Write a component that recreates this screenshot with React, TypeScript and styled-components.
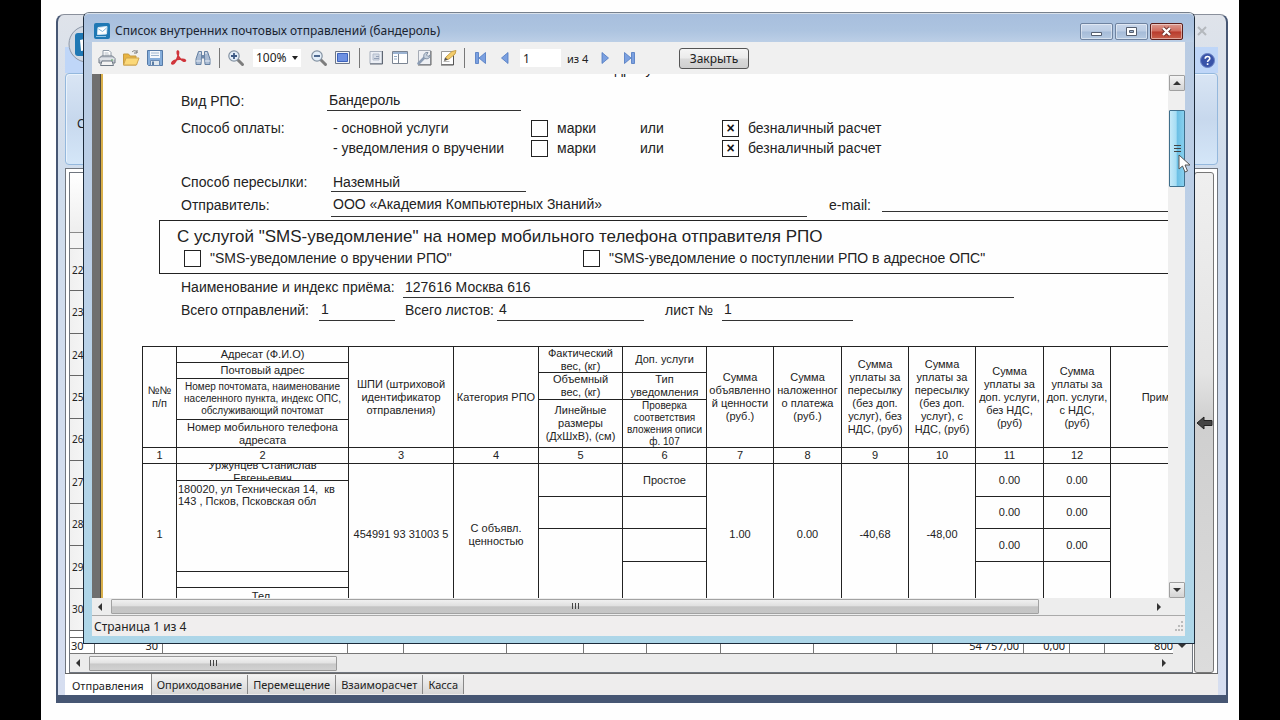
import React from "react";
import styled, { createGlobalStyle } from "styled-components";

const ARIAL = '"Liberation Sans", Arial, sans-serif';
const UI = '"Noto Sans", "Segoe UI", sans-serif';

const Global = createGlobalStyle`
  *, *::before, *::after { box-sizing: border-box; }
  body { margin: 0; background: #000; font-family: ${UI}; font-size: 12px; color: #222; }
  button, input, select { font: inherit; color: inherit; }
`;

const Desktop = styled.main`
  position: relative;
  display: flex;
  height: 100vh;
  min-height: 560px;
  margin: 0 41px;
  padding: 14px 11px 17px 15px;
  background: #fefefe;
  overflow: hidden;
`;

/* ---------- main application window ---------- */

const AppWindow = styled.section`
  position: relative;
  flex: 1;
  min-width: 0;
  display: flex;
  flex-direction: column;
  padding: 0 8px 0 7px;
  border: solid #465673;
  border-width: 1px 2px 8px 2px;
  border-top-color: #8a909c;
  border-radius: 8px 8px 0 0;
  background: linear-gradient(#dfe3ea, #cfdcec 160px, #d6def0);
`;

const AppTitle = styled.header`
  display: flex;
  justify-content: flex-end;
  align-items: center;
  height: 32px;
  flex: none;
  padding: 0 8px 0 4px;
`;

const Orb = styled.svg`
  position: absolute;
  left: 10px;
  top: 10px;
`;

const GhostButton = styled.button`
  width: 16px;
  height: 16px;
  padding: 0;
  border: 0;
  background: none;
  display: flex;
  align-items: center;
  justify-content: center;
`;

const RibbonTabs = styled.div`
  display: flex;
  justify-content: flex-end;
  align-items: center;
  height: 26px;
  flex: none;
  padding-right: 3px;
  background: #bfd6f8;
`;

const Ribbon = styled.div`
  display: flex;
  align-items: center;
  height: 92px;
  flex: none;
  padding: 9px 0 0 11px;
  border: 1px solid #94b8dd;
  border-radius: 4px;
  background: linear-gradient(#d9e5f4, #c7d8ed 50%, #d4e6f8);
  box-shadow: inset 1px 1px 0 #eaf3fc;
`;

const Workspace = styled.div`
  display: flex;
  flex: 1;
  min-height: 0;
  margin-top: 3px;
  padding: 3px 3px 0 3px;
  border: solid #70767f;
  border-width: 1px 1px 0 1px;
  background: #fff;
`;

const Journal = styled.div`
  flex: 1;
  min-width: 0;
  display: flex;
  flex-direction: column;
  border: 1px solid #70767f;
  background: #fff;
`;

const JournalHead = styled.div`
  height: 59px;
  flex: none;
  background: linear-gradient(#fff, #eee);
`;

const JournalFilter = styled.div`
  height: 17px;
  flex: none;
  border: solid #8a8a8a;
  border-width: 1px 0;
  background: #f4f4f4;
`;

const JournalRows = styled.div`
  flex: 1;
  display: flex;
  flex-direction: column;
  min-height: 0;
`;

const JournalRow = styled.div`
  flex: 1;
  display: flex;
  align-items: center;
  padding-left: 2px;
  font-size: 10px;
  border-bottom: 1px solid #666;
  background: linear-gradient(90deg, #f0f0f0, #fafafa 30px, #fff 30px);
`;

const JournalGap = styled.div`
  height: 7px;
  flex: none;
  border-bottom: 1px solid #666;
`;

const TotalsBar = styled.div`
  display: flex;
  align-items: center;
  height: 16px;
  flex: none;
  padding-right: 6px;
  background: #ececec;
`;

const Totals = styled.table`
  flex: 1;
  table-layout: fixed;
  width: 100%;
  height: 16px;
  margin-right: 5px;
  border-collapse: separate;
  border-spacing: 0;
  font-size: 11px;
  line-height: 13px;
  background: #fff;
`;

const TotalCell = styled.td<{ $left?: boolean }>`
  height: 16px;
  padding: 1px 4px 1px 1px;
  text-align: ${(p) => (p.$left ? "left" : "right")};
  border: solid #777;
  border-width: 0 1px 1px 0;
  white-space: nowrap;
  overflow: hidden;
  &:last-child { border-right: 0; padding-right: 0; }
`;

const AppScroll = styled.div`
  display: flex;
  align-items: center;
  height: 18px;
  flex: none;
  padding: 0 24px 0 4px;
  background: #ececec;
`;

const Spacer = styled.div`
  flex: 1;
`;

const AppThumb = styled.div`
  display: flex;
  align-items: center;
  justify-content: center;
  width: 248px;
  height: 15px;
  margin-left: 7px;
  border: 1px solid #9a9a9a;
  border-radius: 1px;
  background: linear-gradient(#f4f4f4, #e2e2e2 48%, #c8c8c8 52%, #d2d2d2);
`;

const SidePane = styled.aside`
  display: flex;
  align-items: center;
  justify-content: center;
  width: 20px;
  margin-left: 1px;
  flex: none;
  border: 1px solid #777;
  border-radius: 3px;
  background: linear-gradient(#efefef, #e4e4e4 40%, #cfcfcf 50%, #dcdcdc);
`;

const SheetTabs = styled.nav`
  display: flex;
  align-items: flex-start;
  height: 22px;
  flex: none;
  border-top: 1px solid #666;
  background: #eeeded;
`;

const SheetTab = styled.button<{ $active?: boolean }>`
  height: ${(p) => (p.$active ? 21 : 19)}px;
  margin-top: ${(p) => (p.$active ? 0 : 1)}px;
  padding: ${(p) => (p.$active ? "3px 7px 0" : "0 5px")};
  border: solid #888;
  border-width: 0 1px 0 0;
  font-size: 11px;
  line-height: 16px;
  background: ${(p) => (p.$active ? "#fff" : "linear-gradient(#f3f3f3, #d6d6d6)")};
`;

/* ---------- report preview dialog ---------- */

const Dialog = styled.section`
  position: absolute;
  top: 12px;
  left: 42px;
  right: 44px;
  bottom: 76px;
  display: flex;
  flex-direction: column;
  padding: 0 9px 7px 8px;
  border: 1px solid #1c2a3a;
  border-top-color: #77808c;
  border-radius: 6px 6px 0 0;
  background: linear-gradient(#b9cbe2, #bcd0e8 40%, #add6e8);
`;

const DialogTitle = styled.header`
  display: flex;
  align-items: center;
  height: 29px;
  flex: none;
  margin: 0 -9px 0 -8px;
  padding: 6px 11px 0 10px;
  border-radius: 5px 5px 0 0;
  border-top: 1px solid #d8e0ea;
  background: linear-gradient(#a7bedd, #adc4e0 60%, #bccfe6);
`;

const DialogName = styled.h1`
  flex: 1;
  margin: 0 0 0 5px;
  font-size: 12px;
  font-weight: 400;
  line-height: 18px;
  color: #1b2430;
`;

const CaptionButton = styled.button<{ $close?: boolean }>`
  display: flex;
  align-items: center;
  justify-content: center;
  width: 33px;
  height: 17px;
  margin-left: 2px;
  padding: 0;
  border: 1px solid ${(p) => (p.$close ? "#5c1f1c" : "#6f83a0")};
  border-radius: 2px;
  box-shadow: inset 0 0 0 1px rgba(255, 255, 255, 0.45);
  background: ${(p) =>
    p.$close
      ? "linear-gradient(#dc9a90, #cf6a5c 48%, #b83a2c 52%, #c8604c)"
      : "linear-gradient(#c8d6ea, #bccde4 48%, #a5bbd8 52%, #b6cae2)"};
`;

const Toolbar = styled.div`
  display: flex;
  align-items: center;
  height: 32px;
  flex: none;
  padding-left: 5px;
  background: #f0f0f0;
`;

const ToolButton = styled.button`
  display: flex;
  align-items: center;
  justify-content: center;
  width: 20px;
  height: 22px;
  margin-right: 4px;
  padding: 0;
  border: 0;
  background: none;
`;

const Divider = styled.span`
  width: 1px;
  height: 20px;
  margin: 0 6px 0 2px;
  background: #777;
`;

const ZoomBox = styled.label`
  display: flex;
  align-items: center;
  width: 48px;
  height: 18px;
  margin: 0 8px 0 3px;
  background: #fff;
`;

const ZoomSelect = styled.select`
  appearance: none;
  width: 39px;
  padding: 0 0 0 3px;
  border: 0;
  background: none;
  font-size: 12px;
  line-height: 18px;
`;

const PageInput = styled.input`
  width: 41px;
  height: 18px;
  margin: 0 6px 0 1px;
  padding: 0 3px;
  border: 0;
  background: #fff;
  font-size: 12px;
`;

const PageCount = styled.span`
  width: 28px;
  font-size: 11px;
`;

const CloseButton = styled.button`
  width: 70px;
  height: 21px;
  margin-left: 36px;
  padding: 0;
  border: 1px solid #555;
  border-radius: 3px;
  font-size: 12px;
  line-height: 17px;
  background: linear-gradient(#f5f5f5, #ebebeb 48%, #dadada 52%, #cfcfcf);
`;

const Viewer = styled.div`
  display: flex;
  flex: 1;
  min-height: 0;
`;

const PageEdge = styled.div`
  width: 11px;
  flex: none;
  border-right: 2px solid #d9b04c;
  background: linear-gradient(90deg, #6f6f6f 8px, #4f4a40 8px);
`;

const Paper = styled.div`
  flex: 1;
  min-width: 0;
  overflow: hidden;
  background: #fefefe;
  font-family: ${ARIAL};
  font-size: 14px;
  line-height: 16px;
  color: #222;
`;

const CutHeading = styled.div`
  display: flex;
  align-items: flex-end;
  height: 3px;
  margin: 0 0 13px 504px;
  overflow: hidden;
`;

const FormRow = styled.div<{ $h: number; $top?: number }>`
  display: flex;
  align-items: stretch;
  height: ${(p) => p.$h}px;
  margin-top: ${(p) => p.$top ?? 0}px;
  padding-left: 78px;
  white-space: nowrap;
`;

const Cell = styled.span<{ $w?: number }>`
  display: flex;
  align-items: center;
  flex: none;
  width: ${(p) => (p.$w ? p.$w + "px" : "auto")};
`;

const Filled = styled(Cell)`
  padding-left: 2px;
  border-bottom: 1px solid #333;
`;

const EmailLine = styled.span`
  flex: 1;
  margin: 0 0 5px 0;
  border-bottom: 1px solid #333;
`;

const Tick = styled.input`
  appearance: none;
  display: grid;
  place-items: center;
  width: 17px;
  height: 17px;
  flex: none;
  margin: 0;
  border: 1px solid #222;
  background: #fff;
  &:checked::after {
    content: "×";
    font: 700 14px/14px ${ARIAL};
    color: #111;
  }
`;

const TickLabel = styled.label<{ $w: number }>`
  display: flex;
  align-items: center;
  gap: 9px;
  flex: none;
  width: ${(p) => p.$w}px;
`;

const SmsBox = styled.div`
  width: 1200px;
  margin: 3px 0 0 56px;
  padding: 3px 0 7px 0;
  border: 1px solid #222;
`;

const SmsTitle = styled.h2`
  margin: 0 0 0 17px;
  font-size: 17px;
  font-weight: 400;
  line-height: 26px;
`;

const SmsOptions = styled.div`
  display: flex;
  height: 16px;
  padding-left: 24px;
  white-space: nowrap;
`;

const Report = styled.table`
  table-layout: fixed;
  width: 1094px;
  margin: 25px 0 0 39px;
  border-collapse: collapse;
  font-size: 11px;
  line-height: 13px;
  text-align: center;
`;

const Head = styled.th`
  height: 101px;
  padding: 0;
  border: 1px solid #222;
  font-weight: 400;
`;

const NumberCell = styled.td`
  height: 16px;
  padding: 0;
  border: 1px solid #222;
`;

const DataCell = styled.td`
  height: 141px;
  padding: 0;
  border: 1px solid #222;
`;

const Stack = styled.div`
  display: flex;
  flex-direction: column;
  height: 100%;
`;

const Part = styled.div<{ $h: number; $small?: boolean; $address?: boolean }>`
  display: flex;
  align-items: ${(p) => (p.$address ? "flex-start" : "center")};
  justify-content: ${(p) => (p.$address ? "flex-start" : "center")};
  height: ${(p) => p.$h}px;
  flex: none;
  padding: ${(p) => (p.$address ? "2px 1px 0 1px" : "0")};
  overflow: hidden;
  text-align: ${(p) => (p.$address ? "left" : "center")};
  font-size: ${(p) => (p.$small ? 10 : 11)}px;
  line-height: ${(p) => (p.$small || p.$address ? 12 : 13)}px;
  white-space: ${(p) => (p.$address ? "pre-wrap" : "pre-line")};
  border-bottom: 1px solid #222;
  &:last-child { border-bottom: 0; }
`;

const Lines = styled.div`
  white-space: pre;
`;

const VScroll = styled.div`
  position: relative;
  display: flex;
  flex-direction: column;
  justify-content: space-between;
  width: 17px;
  flex: none;
  padding: 1px 0 0 1px;
  background: #efefef;
`;

const ArrowButton = styled.button`
  display: flex;
  align-items: center;
  justify-content: center;
  width: 16px;
  height: 16px;
  padding: 0;
  border: 1px solid #a0a0a0;
  border-radius: 1px;
  background: linear-gradient(#f4f4f4, #d4d4d4);
`;

const VThumb = styled.div`
  display: flex;
  align-items: center;
  justify-content: center;
  width: 16px;
  height: 77px;
  margin: 19px 0 auto;
  border: 1px solid #3f6f8c;
  border-radius: 1px;
  background: linear-gradient(90deg, #c5e9f8, #a5ddf4 45%, #6bbfe4 50%, #86cfee);
`;

const HScroll = styled.div`
  display: flex;
  align-items: center;
  height: 18px;
  flex: none;
  padding: 0 22px 0 4px;
  background: #ededed;
  border-bottom: 1px solid #aaa;
`;

const HThumb = styled.div`
  display: flex;
  align-items: center;
  justify-content: center;
  width: 87%;
  height: 15px;
  margin-left: 7px;
  border: 1px solid #a2a2a2;
  border-radius: 1px;
  background: linear-gradient(#f0f0f0, #e0e0e0 45%, #c4c4c4 52%, #c6c6c6);
`;

const Status = styled.footer`
  display: flex;
  align-items: center;
  justify-content: space-between;
  height: 20px;
  flex: none;
  padding: 0 1px 0 2px;
  background: #f0eeee;
  font-size: 12px;
`;

const Pointer = styled.svg`
  position: absolute;
  left: 10px;
  top: 80px;
`;

/* ---------- icons ---------- */

const Icon = ({ children, w = 18, h = 18 }: { children: React.ReactNode; w?: number; h?: number }) => (
  <svg width={w} height={h} viewBox={`0 0 ${w} ${h}`} aria-hidden="true">
    {children}
  </svg>
);

const Logo = () => (
  <svg width="16" height="16" viewBox="0 0 16 16" aria-hidden="true">
    <rect width="16" height="16" rx="2" fill="#1f78b4" />
    <path d="M4 4.500 13 3.500l-.500 7.500-9 .500z" fill="#fff" stroke="#d5e8f5" />
    <path d="m4.500 6 4 2.500L12.500 5" stroke="#7fb4d8" fill="none" />
    <path d="M2 13.500h10" stroke="#8fc3e6" />
  </svg>
);

const Grip = ({ vertical }: { vertical?: boolean }) => (
  <svg width="9" height="9" viewBox="0 0 9 9" aria-hidden="true">
    <path d={vertical ? "M1 1.500h7M1 4.500h7M1 7.500h7" : "M1.500 1v6M4.500 1v6M7.500 1v6"} stroke="#444" fill="none" />
  </svg>
);

const Arrow = ({ dir }: { dir: "up" | "down" | "left" | "right" }) => {
  const d = {
    up: "M0 6 4 2l4 4z",
    down: "M0 2l4 4 4-4z",
    left: "M6 0 2 4l4 4z",
    right: "M2 0l4 4-4 4z",
  }[dir];
  return (
    <svg width="8" height="8" viewBox="0 0 8 8" aria-hidden="true">
      <path d={d} fill="#333" />
    </svg>
  );
};

const PrintIcon = () => (
  <Icon>
    <path d="M5 7V1.500h6l2 2V7" fill="#fff" stroke="#8d98a5" />
    <path d="M6.500 4h4M6.500 6h5" stroke="#b4bcc6" />
    <path d="M1 9.500 3.500 7h11L17 9.500V14H1z" fill="#c9ced6" stroke="#6f7985" />
    <path d="M1.500 10h15" stroke="#f4f6f8" />
    <path d="M4 12h10l1.500 4.500h-13z" fill="#f3f3f3" stroke="#6f7985" />
    <path d="M13 11h2" stroke="#57a557" />
  </Icon>
);

const OpenIcon = () => (
  <Icon>
    <path d="M1.500 16V5h5l1.500 2h6v9z" fill="#e9b440" stroke="#c69a40" />
    <path d="M1.500 16 4 9h13l-2.500 7z" fill="#fbd878" stroke="#cfa550" />
    <path d="M10 3c2-2 4-1.500 5 .500m0-2.500v3h-3" fill="none" stroke="#777" />
  </Icon>
);

const SaveIcon = () => (
  <Icon>
    <path d="M1.500 1.500h15v15h-14l-1-1z" fill="#86aedb" stroke="#567aa6" />
    <path d="M4 2h10v7H4z" fill="#f4f8fc" />
    <path d="M5 4h8M5 6.500h8" stroke="#9eb6cf" />
    <path d="M4.500 11.500h9v5h-9z" fill="#dfe7ee" stroke="#6a8ab3" />
    <path d="M6 12.500h2V16H6z" fill="#5b7ca3" />
  </Icon>
);

const PdfIcon = () => (
  <Icon>
    <path
      d="M7.500 2c1.500-.500 1.300 2.500.300 5.500C6.800 10.500 4.500 14.500 2.800 15c-1.800.300-1.300-2 1.200-3.200 3-1.500 7.500-2 10.200-1.300 2.300.800 1.300 2.500-.900 1.500C10.500 10.800 7.800 7 7.300 4.500 7 3 7 2.300 7.500 2z"
      fill="#d8444a"
      fillRule="evenodd"
      stroke="#d0343a"
      strokeWidth="1.500"
    />
  </Icon>
);

const FindIcon = () => (
  <Icon>
    <path d="M4.500 2.500h3V8l-.500 7.500h-5V10zM10.500 2.500h3L16 10v5.500h-5L10.500 8z" fill="#a9bbd3" stroke="#6580a2" />
    <path d="M7.500 6h3v3.500h-3z" fill="#6f89aa" />
    <path d="M2 12h5M11 12h5" stroke="#e8eef6" />
    <path d="M5 4h2M11 4h2" stroke="#eef3f8" />
  </Icon>
);

const MagnifyIcon = ({ plus }: { plus?: boolean }) => (
  <Icon>
    <path d="m11 11 4.500 4.500" stroke="#7d7d7d" strokeWidth="3" strokeLinecap="round" />
    <circle cx="7" cy="7" r="5.200" fill="#e4eef8" stroke="#8593a3" strokeWidth="1.200" />
    <path d={plus ? "M4 7h6M7 4v6" : "M4 7h6"} stroke="#3d5a84" strokeWidth="1.800" />
  </Icon>
);

const FitIcon = () => (
  <Icon>
    <path d="M1.500 2.500h14v12h-14z" fill="#f2f4f8" stroke="#6c7688" />
    <path d="M3.500 4.500h10v8h-10z" fill="#6d90e2" stroke="#3d62ba" />
  </Icon>
);

const MarginsIcon = () => (
  <Icon>
    <path d="M3 2.500h12v12H3z" fill="#eceff5" stroke="#a8b0bd" />
    <path d="M15.500 2v13H3" fill="none" stroke="#5f6672" />
    <path d="M6 5h6v6H6z" fill="#d5dbe6" stroke="#b4bdcc" />
    <path d="M9 7.500h3M7 9.500h5" stroke="#95a2b8" />
  </Icon>
);

const OutlineIcon = () => (
  <Icon>
    <path d="M1.500 2.500h15v12h-15z" fill="#fff" stroke="#7b8593" />
    <path d="M2 4h14" stroke="#9bb3d2" strokeWidth="2" />
    <path d="M7.500 5v9" stroke="#7b8593" />
    <path d="M3 7.500h3M3 10h3" stroke="#8fa8c4" />
  </Icon>
);

const SettingsIcon = () => (
  <Icon>
    <path d="M3.500 1.500h12v14h-12z" fill="#eef0f4" stroke="#a5abb5" />
    <path d="M16 2v14H3" fill="none" stroke="#666" />
    <path d="m3.500 14.500 6-6" stroke="#8b9cb4" strokeWidth="2.600" strokeLinecap="round" />
    <path d="M9 8.500C8 5.500 10 3 13 3.500L11.500 6l1.500 1.500 2-1.500c.500 3-2.500 4.500-5 3.500z" fill="#c6d1de" stroke="#8190a5" />
  </Icon>
);

const EditIcon = () => (
  <Icon>
    <path d="M2.500 2.500h12v13h-12z" fill="#fdfdfd" stroke="#999" />
    <path d="M14.500 3v13H2" fill="none" stroke="#555" />
    <path d="M4.500 12.500h6" stroke="#b5b5b5" />
    <path d="m6 11 1-3 6-5.500 4-1-1 3.500-6 5z" fill="#f3cd6c" stroke="#c9a04a" />
    <path d="m5 12 1-3.500 3 2z" fill="#555" />
  </Icon>
);

const NavIcon = ({ kind }: { kind: "first" | "prev" | "next" | "last" }) => {
  const left = kind === "first" || kind === "prev";
  const bar = kind === "first" || kind === "last";
  return (
    <Icon w={14} h={14}>
      <g transform={left ? undefined : "matrix(-1 0 0 1 14 0)"} fill="#7ba0e0" stroke="#4d77bf" strokeWidth="0.800">
        {bar && <path d="M1.500 1.500h3v11h-3z" />}
        <path d={bar ? "M11.500 1.500v11L5 7z" : "M10 1.500v11L3.500 7z"} />
      </g>
    </Icon>
  );
};

/* ---------- data ---------- */

const journalNumbers = [22, 23, 24, 25, 26, 27, 28, 29, 30];

const totalColumns: Array<[string, number | undefined]> = [
  ["30", 25],
  ["30", 68],
  ["", 185],
  ["", 56],
  ["", 103],
  ["", 77],
  ["", 63],
  ["", 74],
  ["", 93],
  ["", 83],
  ["", 36],
  ["54 757,00", 91],
  ["0,00", 46],
  ["", 35],
  ["800", undefined],
];

const reportColumns = [34, 172, 105, 85, 84, 84, 67, 68, 67, 67, 68, 67, 126];

const tools: Array<[string, React.ReactNode]> = [
  ["Печать", <PrintIcon />],
  ["Открыть", <OpenIcon />],
  ["Сохранить", <SaveIcon />],
  ["Экспорт в PDF", <PdfIcon />],
  ["Найти", <FindIcon />],
];

const pageTools: Array<[string, React.ReactNode]> = [
  ["Поля страницы", <MarginsIcon />],
  ["Структура", <OutlineIcon />],
  ["Параметры", <SettingsIcon />],
  ["Правка", <EditIcon />],
];

const sheets = ["Отправления", "Оприходование", "Перемещение", "Взаиморасчет", "Касса"];

const Tool = ({ name, children }: { name: string; children: React.ReactNode }) => (
  <ToolButton type="button" aria-label={name}>
    {children}
  </ToolButton>
);

const PaymentRow = ({ label, kind, top }: { label: string; kind: string; top?: number }) => (
  <FormRow $h={20} $top={top}>
    <Cell $w={152}>{label}</Cell>
    <Cell $w={198}>{kind}</Cell>
    <TickLabel $w={109}>
      <Tick type="checkbox" />
      марки
    </TickLabel>
    <Cell $w={82}>или</Cell>
    <TickLabel $w={180}>
      <Tick type="checkbox" defaultChecked />
      безналичный расчет
    </TickLabel>
  </FormRow>
);

const Form = () => (
  <>
    <CutHeading>адресу</CutHeading>
    <FormRow $h={21}>
      <Cell $w={146}>Вид РПО:</Cell>
      <Filled $w={194}>Бандероль</Filled>
    </FormRow>
    <PaymentRow top={7} label="Способ оплаты:" kind="- основной услуги" />
    <PaymentRow label="" kind="- уведомления о вручении" />
    <FormRow $h={20} $top={14}>
      <Cell $w={150}>Способ пересылки:</Cell>
      <Filled $w={195}>Наземный</Filled>
    </FormRow>
    <FormRow $h={25}>
      <Cell $w={150}>Отправитель:</Cell>
      <Filled $w={476}>ООО «Академия Компьютерных Знаний»</Filled>
      <Cell $w={75}>
        <Cell $w={22} />
        e-mail:
      </Cell>
      <EmailLine />
    </FormRow>
    <SmsBox>
      <SmsTitle>С услугой "SMS-уведомление" на номер мобильного телефона отправителя РПО</SmsTitle>
      <SmsOptions>
        <TickLabel $w={399}>
          <Tick type="checkbox" />
          "SMS-уведомление о вручении РПО"
        </TickLabel>
        <TickLabel $w={410}>
          <Tick type="checkbox" />
          "SMS-уведомление о поступлении РПО в адресное ОПС"
        </TickLabel>
      </SmsOptions>
    </SmsBox>
    <FormRow $h={22} $top={2}>
      <Cell $w={222}>Наименование и индекс приёма:</Cell>
      <Filled $w={611}>127616 Москва 616</Filled>
    </FormRow>
    <FormRow $h={23}>
      <Cell $w={138}>Всего отправлений:</Cell>
      <Filled $w={76}>1</Filled>
      <Cell $w={102}>
        <Cell $w={10} />
        Всего листов:
      </Cell>
      <Filled $w={147}>4</Filled>
      <Cell $w={78}>
        <Cell $w={21} />
        лист №
      </Cell>
      <Filled $w={131}>1</Filled>
    </FormRow>
  </>
);

const ReportTable = () => (
  <Report>
    <colgroup>
      {reportColumns.map((w, i) => (
        <col key={i} width={w} />
      ))}
    </colgroup>
    <thead>
      <tr>
        <Head>№№<br />п/п</Head>
        <Head>
          <Stack>
            <Part $h={16}>Адресат (Ф.И.О)</Part>
            <Part $h={16}>Почтовый адрес</Part>
            <Part $h={41} $small>
              {"Номер почтомата, наименование\nнаселенного пункта, индекс ОПС,\nобслуживающий почтомат"}
            </Part>
            <Part $h={27}>{"Номер мобильного телефона\nадресата"}</Part>
          </Stack>
        </Head>
        <Head><Lines>{"ШПИ (штриховой\nидентификатор\nотправления)"}</Lines></Head>
        <Head><Lines>Категория РПО</Lines></Head>
        <Head>
          <Stack>
            <Part $h={26}>{"Фактический\nвес, (кг)"}</Part>
            <Part $h={27}>{"Объемный\nвес, (кг)"}</Part>
            <Part $h={47}>{"Линейные\nразмеры\n(ДхШхВ), (см)"}</Part>
          </Stack>
        </Head>
        <Head>
          <Stack>
            <Part $h={26}>Доп. услуги</Part>
            <Part $h={27}>{"Тип\nуведомления"}</Part>
            <Part $h={47} $small>{"Проверка\nсоответствия\nвложения описи\nф. 107"}</Part>
          </Stack>
        </Head>
        <Head><Lines>{"Сумма\nобъявленно\nй ценности\n(руб.)"}</Lines></Head>
        <Head><Lines>{"Сумма\nналоженног\nо платежа\n(руб.)"}</Lines></Head>
        <Head><Lines>{"Сумма\nуплаты за\nпересылку\n(без доп.\nуслуг), без\nНДС, (руб)"}</Lines></Head>
        <Head><Lines>{"Сумма\nуплаты за\nпересылку\n(без доп.\nуслуг), с\nНДС, (руб)"}</Lines></Head>
        <Head><Lines>{"Сумма\nуплаты за\nдоп. услуги,\nбез НДС,\n(руб)"}</Lines></Head>
        <Head><Lines>{"Сумма\nуплаты за\nдоп. услуги,\nс НДС,\n(руб)"}</Lines></Head>
        <Head>Примечание</Head>
      </tr>
    </thead>
    <tbody>
      <tr>
        {reportColumns.map((_, i) => (
          <NumberCell key={i}>{i < 12 ? i + 1 : null}</NumberCell>
        ))}
      </tr>
      <tr>
        <DataCell>1</DataCell>
        <DataCell>
          <Stack>
            <Part $h={17}>{"Уржунцев Станислав\nЕвгеньевич"}</Part>
            <Part $h={91} $address>{"180020, ул Техническая 14,  кв\n143 , Псков, Псковская обл"}</Part>
            <Part $h={16} />
            <Part $h={17}>Тел.</Part>
          </Stack>
        </DataCell>
        <DataCell>454991 93 31003 5</DataCell>
        <DataCell><Lines>{"С объявл.\nценностью"}</Lines></DataCell>
        <DataCell>
          <Stack>
            <Part $h={33} />
            <Part $h={32} />
            <Part $h={76} />
          </Stack>
        </DataCell>
        <DataCell>
          <Stack>
            <Part $h={33}>Простое</Part>
            <Part $h={32} />
            <Part $h={33} />
            <Part $h={43} />
          </Stack>
        </DataCell>
        <DataCell>1.00</DataCell>
        <DataCell>0.00</DataCell>
        <DataCell>-40,68</DataCell>
        <DataCell>-48,00</DataCell>
        {[11, 12].map((n) => (
          <DataCell key={n}>
            <Stack>
              <Part $h={33}>0.00</Part>
              <Part $h={32}>0.00</Part>
              <Part $h={33}>0.00</Part>
              <Part $h={43} />
            </Stack>
          </DataCell>
        ))}
        <DataCell />
      </tr>
    </tbody>
  </Report>
);

export default function App() {
  return (
    <>
      <Global />
      <Desktop>
        <AppWindow>
          <AppTitle>
            <GhostButton type="button" aria-label="Закрыть приложение">
              <svg width="10" height="10" viewBox="0 0 10 10" aria-hidden="true">
                <path d="m1 1 8 8M9 1 1 9" stroke="#b4b8bd" strokeWidth="2" />
              </svg>
            </GhostButton>
          </AppTitle>
          <RibbonTabs>
            <GhostButton type="button" aria-label="Справка">
              <svg width="15" height="15" viewBox="0 0 15 15" aria-hidden="true">
                <circle cx="7.500" cy="7.500" r="7" fill="#3953a8" stroke="#6c83c4" />
                <path d="M5.200 5.800c0-3 4.600-3 4.600-.300 0 1.700-2.200 1.700-2.200 3.500M7.600 10.300v1.700" stroke="#fff" strokeWidth="1.600" fill="none" />
              </svg>
            </GhostButton>
          </RibbonTabs>
          <Orb width="38" height="38" viewBox="0 0 38 38" aria-hidden="true">
            <circle cx="19" cy="19" r="18" fill="#d3dae4" stroke="#8c97a8" />
            <rect x="7" y="8" width="24" height="23" rx="3" fill="#1f78b4" />
            <path d="m12 15 14-3v12l-13 2z" fill="#fff" />
          </Orb>
          <Ribbon>Создать</Ribbon>
          <Workspace>
            <Journal>
              <JournalHead />
              <JournalFilter />
              <JournalRows>
                {journalNumbers.map((n) => (
                  <JournalRow key={n}>{n}</JournalRow>
                ))}
              </JournalRows>
              <JournalGap />
              <TotalsBar>
                <Totals>
                  <colgroup>
                    {totalColumns.map(([, w], i) => (
                      <col key={i} width={w} />
                    ))}
                  </colgroup>
                  <tbody>
                    <tr>
                      {totalColumns.map(([text], i) => (
                        <TotalCell key={i} $left={i === 0}>{text}</TotalCell>
                      ))}
                    </tr>
                  </tbody>
                </Totals>
                <Arrow dir="down" />
              </TotalsBar>
              <AppScroll>
                <Arrow dir="left" />
                <AppThumb><Grip /></AppThumb>
                <Spacer />
                <Arrow dir="right" />
              </AppScroll>
            </Journal>
            <SidePane>
              <svg width="17" height="14" viewBox="0 0 17 14" aria-hidden="true">
                <path d="M1 7 8 1v3.500h8v5H8V13z" fill="#444" stroke="#222" />
              </svg>
            </SidePane>
          </Workspace>
          <SheetTabs>
            {sheets.map((s, i) => (
              <SheetTab key={s} type="button" $active={i === 0}>{s}</SheetTab>
            ))}
          </SheetTabs>
        </AppWindow>

        <Dialog role="dialog" aria-labelledby="dialog-name">
          <DialogTitle>
            <Logo />
            <DialogName id="dialog-name">Список внутренних почтовых отправлений (бандероль)</DialogName>
            <CaptionButton type="button" aria-label="Свернуть">
              <svg width="13" height="11" viewBox="0 0 13 11" aria-hidden="true">
                <path d="M1.500 6.500h10v3h-10z" fill="#fff" stroke="#555f70" />
              </svg>
            </CaptionButton>
            <CaptionButton type="button" aria-label="Развернуть">
              <svg width="13" height="11" viewBox="0 0 13 11" aria-hidden="true">
                <path d="M1.500 1.500h10v8h-10z" fill="#fff" stroke="#555f70" />
                <path d="M4.500 4.500h4v2h-4z" fill="#9db3d0" stroke="#555f70" />
              </svg>
            </CaptionButton>
            <CaptionButton type="button" aria-label="Закрыть окно" $close>
              <svg width="13" height="11" viewBox="0 0 13 11" aria-hidden="true">
                <path d="m3 2 7 7M10 2 3 9" stroke="#6b2f2a" strokeWidth="4" />
                <path d="m3 2 7 7M10 2 3 9" stroke="#fff" strokeWidth="2.400" />
              </svg>
            </CaptionButton>
          </DialogTitle>
          <Toolbar>
            {tools.map(([name, icon]) => (
              <Tool key={name} name={name}>{icon}</Tool>
            ))}
            <Divider />
            <Tool name="Увеличить"><MagnifyIcon plus /></Tool>
            <ZoomBox>
              <ZoomSelect aria-label="Масштаб" defaultValue="100%">
                <option>100%</option>
              </ZoomSelect>
              <svg width="6" height="4" viewBox="0 0 6 4" aria-hidden="true"><path d="M0 0h6L3 4z" fill="#222" /></svg>
            </ZoomBox>
            <Tool name="Уменьшить"><MagnifyIcon /></Tool>
            <Tool name="По размеру окна"><FitIcon /></Tool>
            <Divider />
            {pageTools.map(([name, icon]) => (
              <Tool key={name} name={name}>{icon}</Tool>
            ))}
            <Divider />
            <Tool name="Первая страница"><NavIcon kind="first" /></Tool>
            <Tool name="Предыдущая страница"><NavIcon kind="prev" /></Tool>
            <PageInput aria-label="Номер страницы" defaultValue="1" />
            <PageCount>из 4</PageCount>
            <Tool name="Следующая страница"><NavIcon kind="next" /></Tool>
            <Tool name="Последняя страница"><NavIcon kind="last" /></Tool>
            <CloseButton type="button">Закрыть</CloseButton>
          </Toolbar>
          <Viewer>
            <PageEdge />
            <Paper>
              <Form />
              <ReportTable />
            </Paper>
            <VScroll>
              <ArrowButton type="button" aria-label="Прокрутить вверх"><Arrow dir="up" /></ArrowButton>
              <VThumb><Grip vertical /></VThumb>
              <ArrowButton type="button" aria-label="Прокрутить вниз"><Arrow dir="down" /></ArrowButton>
              <Pointer width="13" height="20" viewBox="0 0 13 20" aria-hidden="true">
                <path d="M1 1v14l3.500-3 2.500 6 2.500-1-2.500-6H12z" fill="#fff" stroke="#555" />
              </Pointer>
            </VScroll>
          </Viewer>
          <HScroll>
            <Arrow dir="left" />
            <HThumb><Grip /></HThumb>
            <Spacer />
            <Arrow dir="right" />
          </HScroll>
          <Status>
            Страница 1 из 4
            <svg width="12" height="12" viewBox="0 0 12 12" aria-hidden="true">
              <path d="M9 2h2M6 6h2M9 6h2M3 10h2M6 10h2M9 10h2" stroke="#bbb" strokeWidth="2" />
            </svg>
          </Status>
        </Dialog>
      </Desktop>
    </>
  );
}
